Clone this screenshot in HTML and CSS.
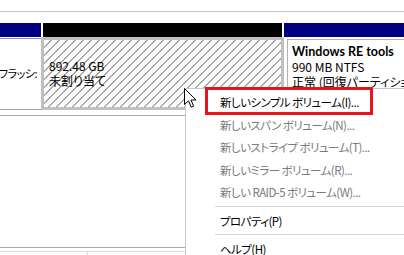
FILE: index.html
```html
<!DOCTYPE html>
<html lang="ja">
<head>
<meta charset="utf-8">
<link rel="stylesheet" href="styles.css">
</head>
<body>
<div class="page">
  <div class="top"></div>
  <div class="top-gap"></div>
  <div class="bars">
    <div class="bar bar-blue bar-first"></div>
    <div class="bar bar-black"></div>
    <div class="bar bar-blue bar-last"></div>
  </div>
  <div class="cells">
    <div class="cell-left">
      <div class="cell-left-inner"><span>フラッシ:</span></div>
    </div>
    <div class="cell-free">
      <div class="cell-free-inner">
        <div class="line">892.48 GB</div>
        <div class="line">未割り当て</div>
      </div>
    </div>
    <div class="cell-re">
      <div class="cell-re-inner">
        <div class="line bold">Windows RE tools</div>
        <div class="line">990 MB NTFS</div>
        <div class="line">正常 (回復パーティション)</div>
      </div>
    </div>
  </div>
  <div class="lower">
    <div class="lower-bottom">
      <div class="tick"></div>
    </div>
  </div>
</div>

<div class="menu">
  <div class="item">新しいシンプル ボリューム(I)...</div>
  <div class="item disabled">新しいスパン ボリューム(N)...</div>
  <div class="item disabled">新しいストライプ ボリューム(T)...</div>
  <div class="item disabled">新しいミラー ボリューム(R)...</div>
  <div class="item disabled">新しい RAID-5 ボリューム(W)...</div>
  <div class="sep"></div>
  <div class="item">プロパティ(P)</div>
  <div class="sep"></div>
  <div class="item">ヘルプ(H)</div>
</div>

<div class="highlight"></div>

<svg class="cursor" width="13" height="21" viewBox="0 0 13 21">
  <path d="M0.5 0.5 L0.5 16.5 L4.5 12.8 L7.2 19.2 L9.6 18.2 L7 12 L12 12 Z" fill="#fff" stroke="#000" stroke-width="1" stroke-linejoin="miter"/>
</svg>
</body>
</html>
```

FILE: styles.css
```css
html, body {
  margin: 0;
  padding: 0;
  background: #fff;
}
body {
  width: 404px;
  height: 255px;
  overflow: hidden;
  position: relative;
  font-family: "Noto Sans CJK JP", "Noto Sans", sans-serif;
  font-size: 12px;
  font-feature-settings: "palt";
  color: #000;
}
.page {
  width: 404px;
}
.top {
  height: 11px;
  border-bottom: 1px solid #c4c4c4;
}
.top-gap {
  height: 11px;
}
.bars {
  display: flex;
  height: 14px;
  gap: 2px;
}
.bar-blue {
  background: #000080;
}
.bar-first {
  width: 41px;
  flex-shrink: 0;
}
.bar-black {
  background: #000;
  width: 239px;
  flex-shrink: 0;
}
.bar-last {
  flex: 1;
}
.cells {
  display: flex;
  height: 74px;
}
.cell-left {
  width: 41px;
  flex-shrink: 0;
  padding-top: 1px;
  box-sizing: border-box;
}
.cell-left-inner {
  height: 72px;
  border-top: 1px solid #8c8cd0;
  border-bottom: 1px solid #a0a0a0;
  box-sizing: border-box;
  display: flex;
  align-items: center;
  justify-content: flex-end;
  padding: 0 4px 3px 0;
  white-space: nowrap;
  overflow: hidden;
  font-size: 11px;
  letter-spacing: -0.5px;
}
.cell-free {
  width: 243px;
  flex-shrink: 0;
  box-sizing: border-box;
}
.cell-free-inner {
  height: 73px;
  border: 3px solid #c0c0c0;
  box-sizing: border-box;
  background-color: #fff;
  background-image: repeating-linear-gradient(135deg, #fff 0px, #fff 4.6px, #a8a8a8 4.6px, #a8a8a8 5.66px);
  padding: 18px 0 0 5px;
  line-height: 15px;
}
.cell-re {
  flex: 1;
  min-width: 0;
  padding: 2px 0 0 3px;
  box-sizing: border-box;
}
.cell-re-inner {
  height: 71px;
  border: 1px solid #b4b4b4;
  border-right: none;
  box-sizing: border-box;
  padding: 4px 0 0 4px;
  line-height: 15px;
  white-space: nowrap;
  overflow: hidden;
}
.line {
  white-space: nowrap;
}
.bold {
  font-weight: bold;
  font-family: "Lato", "Noto Sans CJK JP", sans-serif;
  font-size: 12.5px;
}
.lower {
  height: 144px;
  padding-top: 4px;
  box-sizing: border-box;
}
.lower::before {
  content: "";
  display: block;
  height: 0;
  border-top: 1px solid #a8a8a8;
}
.lower-bottom {
  margin-top: 131px;
  border-top: 1px solid #a8a8a8;
  height: 7px;
}
.lower-bottom::before {
  content: "";
  display: block;
  margin-top: 3px;
  border-top: 1px solid #dcdcdc;
}
.tick {
  width: 0;
  height: 4px;
  margin-left: 87px;
  border-left: 1px solid #dcdcdc;
}
.menu {
  position: absolute;
  left: 185px;
  top: 88px;
  width: 240px;
  background: #fff;
  border: 1px solid #c8c8c8;
  padding: 2px 0;
  font-size: 11.5px;
  letter-spacing: -0.55px;
}
.item {
  height: 22.5px;
  line-height: 22.5px;
  padding-left: 34px;
  white-space: nowrap;
}
.item.disabled {
  color: #7a7a7a;
}
.sep {
  margin: 2px 0 3px 29px;
  border-top: 1px solid #d4d4d4;
}
.highlight {
  position: absolute;
  left: 205px;
  top: 87px;
  width: 168px;
  height: 28px;
  border: 3px solid #e8141b;
  box-sizing: border-box;
}
.cursor {
  position: absolute;
  left: 184px;
  top: 88px;
}
```
